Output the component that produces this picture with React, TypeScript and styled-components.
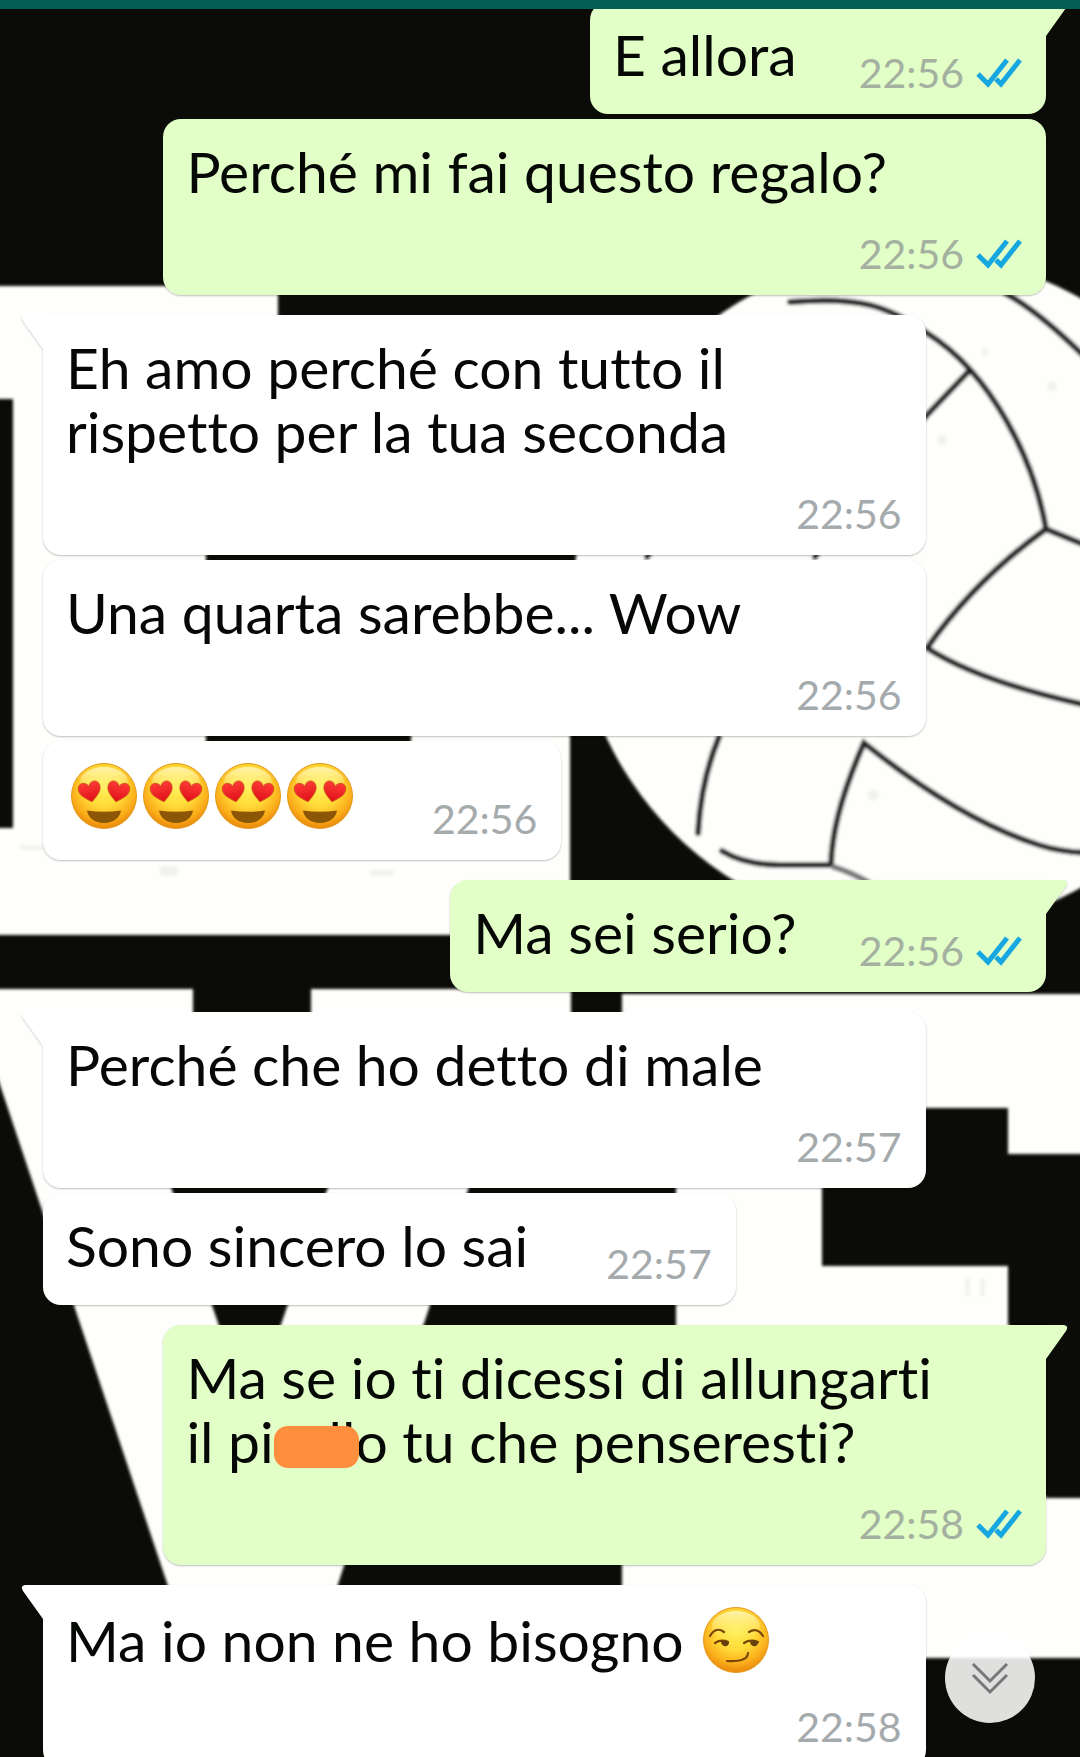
import React from 'react';
import styled, { createGlobalStyle, css } from 'styled-components';

const GlobalStyle = createGlobalStyle`
  *, *::before, *::after { box-sizing: border-box; }
  body { margin: 0; background: #0b0c07; font-family: Lato, "Liberation Sans", sans-serif; }
`;

const Screen = styled.main`
  position: relative;
  height: 100vh;
  overflow: hidden;
  background: #0b0c07;
`;

const Wallpaper = styled.svg`
  position: absolute;
  inset: 0;
  width: 100%;
  height: 100%;
`;

const TopBar = styled.header`
  position: absolute;
  inset: 0 0 auto;
  z-index: 2;
  height: 9px;
  background: #065f54;
`;

const MessageList = styled.ol`
  position: relative;
  display: flex;
  flex-direction: column;
  gap: 20px;
  margin: 0;
  padding: 2px 34px 0 43px;
  list-style: none;
`;

const Group = styled.li<{ $sent: boolean }>`
  display: flex;
  flex-direction: column;
  align-items: ${p => (p.$sent ? 'flex-end' : 'flex-start')};
  gap: 5px;
`;

const Bubble = styled.article<{ $sent: boolean; $tail: boolean; $stacked: boolean }>`
  position: relative;
  display: flex;
  max-width: 88%;
  padding: 20px 24px 13px 23px;
  border-radius: 18px;
  background: ${p => (p.$sent ? '#e1ffc7' : '#ffffff')};
  box-shadow: 0 1px 2px rgba(0, 0, 0, 0.25);
  ${p => p.$stacked && css`flex-direction: column; width: 88%;`}
  ${p => p.$tail && (p.$sent ? css`border-top-right-radius: 0;` : css`border-top-left-radius: 0;`)}
`;

const TailShape = styled.svg<{ $sent: boolean }>`
  position: absolute;
  top: 0;
  ${p => (p.$sent ? css`left: 100%;` : css`right: 100%; transform: scaleX(-1);`)}
  width: 22px;
  height: 34px;
  fill: ${p => (p.$sent ? '#e1ffc7' : '#ffffff')};
  filter: drop-shadow(0 1px 1px rgba(0, 0, 0, 0.2));
  clip-path: inset(0 -4px -4px 0);
`;

const Text = styled.p<{ $emoji: boolean; $stacked: boolean }>`
  margin: 0;
  padding-bottom: ${p => (p.$stacked ? 0 : 15)}px;
  color: #050805;
  font-size: 57px;
  font-variant-ligatures: none;
  line-height: ${p => (p.$emoji ? 71 : 64)}px;
  white-space: pre-line;
`;

const Meta = styled.footer<{ $sent: boolean }>`
  display: flex;
  align-items: center;
  align-self: flex-end;
  gap: 12px;
  margin-left: ${p => (p.$sent ? 62 : 78)}px;
  padding-top: 23px;
  color: ${p => (p.$sent ? '#a4b0a0' : '#a5aaad')};
  font-size: 41px;
  line-height: 56px;
`;

const CheckIcon = styled.svg`
  width: 46px;
  height: 30px;
`;

const Redacted = styled.span`
  position: relative;
  &::after {
    content: '';
    position: absolute;
    inset: 19px -4px 7px 0;
    border-radius: 14px;
    background: #ff8f3e;
  }
`;

const EmojiIcon = styled.svg`
  width: 72px;
  height: 70px;
  vertical-align: -13px;
`;

const GradientStore = styled.svg`
  position: absolute;
  width: 0;
  height: 0;
`;

const ScrollButton = styled.button`
  position: absolute;
  right: 45px;
  bottom: 34px;
  z-index: 1;
  display: grid;
  place-items: center;
  width: 90px;
  height: 90px;
  padding: 0;
  border: 0;
  border-radius: 50%;
  background: rgba(255, 255, 255, 0.87);
  cursor: pointer;
`;

function Background() {
  return (
    <Wallpaper viewBox="0 0 1080 1757" preserveAspectRatio="xMidYMin slice" aria-hidden="true">
      <defs>
        <filter id="soft" x="-5%" y="-5%" width="110%" height="110%">
          <feGaussianBlur stdDeviation="1.5" />
        </filter>
      </defs>
      <g filter="url(#soft)">
        <g fill="#fefefc">
          <path d="M-9 286H278V400H206V828H411V650H570V935H-9V828H13V399H-9Z" />
          <path d="M-9 989H193V1060H130L172 1190L250 1415L327 1190L372 1060H311V989H571V1060H510L468 1190L341 1575L320 1640H186L167 1583L-9 1058Z" />
          <path d="M622 994H1090V1154H1008V1108H822V1266H1008V1498H1090V1658H622V1540H676V1060H622Z" />
          <circle cx="913" cy="593" r="339" />
        </g>
        <path d="M1008 1325V1498H1046V1325Z" fill="#0b0c07" />
        <g fill="none" stroke="#242424" strokeWidth="6" strokeLinecap="round">
          <path d="M790 302C860 296 888 306 927 333C992 374 1034 460 1046 529L1090 547" />
          <path d="M969 371L927 415L850 500L815 557" />
          <path d="M1005 293Q1040 312 1090 362" />
          <path d="M1046 529Q975 580 927 648Q980 682 1090 706" />
          <path d="M719 737Q701 780 698 833" />
          <path d="M722 851Q745 865 780 865H831Q832 815 864 743Q960 820 1039 845Q1060 852 1090 853" />
          <path d="M647 557L680 500" />
          <path d="M834 867Q850 872 868 882" stroke="#777" />
        </g>
        <g fill="#5d5d5d" opacity="0.07">
          <circle cx="985" cy="352" r="4" />
          <circle cx="942" cy="440" r="5" />
          <circle cx="1052" cy="386" r="5" />
          <circle cx="1030" cy="470" r="4" />
          <circle cx="873" cy="795" r="6" />
          <rect x="20" y="845" width="24" height="5" />
          <rect x="160" y="866" width="18" height="10" />
          <rect x="370" y="870" width="24" height="6" />
          <rect x="965" y="1278" width="5" height="18" />
          <rect x="980" y="1278" width="5" height="18" />
        </g>
      </g>
    </Wallpaper>
  );
}

function EmojiDefs() {
  return (
    <GradientStore aria-hidden="true">
      <defs>
        <radialGradient id="face" cx="0.5" cy="0.36" r="0.66">
          <stop offset="0" stopColor="#ffee55" />
          <stop offset="0.45" stopColor="#ffdb38" />
          <stop offset="0.75" stopColor="#fbb01c" />
          <stop offset="1" stopColor="#e8830a" />
        </radialGradient>
        <linearGradient id="shine" x1="0" y1="0" x2="0" y2="1">
          <stop offset="0" stopColor="#fffbd0" stopOpacity="0.75" />
          <stop offset="1" stopColor="#fff27a" stopOpacity="0" />
        </linearGradient>
        <linearGradient id="heart" x1="0" y1="0" x2="0" y2="1">
          <stop offset="0" stopColor="#ff3b35" />
          <stop offset="1" stopColor="#dc0f18" />
        </linearGradient>
      </defs>
    </GradientStore>
  );
}

function Face() {
  return (
    <>
      <circle r="32.5" fill="url(#face)" stroke="#e39a1c" strokeWidth="1" />
      <ellipse cy="-14" rx="24" ry="15" fill="url(#shine)" />
    </>
  );
}

function HeartEyes() {
  const heart = 'M0 10C-5 6-11 2-11-4C-11-11-3-12 0-6C3-12 11-11 11-4C11 2 5 6 0 10Z';
  return (
    <EmojiIcon viewBox="-38 -35 72 70" role="img" aria-label="Faccina con occhi a cuore">
      <Face />
      <g fill="url(#heart)" stroke="#c9541a" strokeWidth="0.8">
        <path d={heart} transform="translate(-14 -4) rotate(-12)" />
        <path d={heart} transform="translate(14 -4) rotate(12)" />
      </g>
      <path d="M-17 14.5Q0 17 17 14.5C16 22 9 27 0 27S-16 22-17 14.5Z" fill="#8b5606" />
    </EmojiIcon>
  );
}

function Smirk() {
  return (
    <EmojiIcon viewBox="-38 -35 72 70" role="img" aria-label="Faccina maliziosa">
      <Face />
      <g fill="none" stroke="#7a4708" strokeWidth="2.2" strokeLinecap="round">
        <path d="M-26-4Q-20-14-12-8" />
        <path d="M13-8Q21-13 27-4" />
        <path d="M-21 3Q-15-1-8 2" />
        <path d="M8 3Q14-1 22 2" />
        <path d="M-9 21Q12 22 12 13" />
      </g>
      <g fill="#68400c">
        <path d="M-15 1Q-8-1-7 3Q-8 7-12 6Q-15 5-15 1Z" />
        <path d="M14 1Q21-1 22 3Q21 7 17 6Q14 5 14 1Z" />
      </g>
    </EmojiIcon>
  );
}

function ReadChecks() {
  return (
    <CheckIcon viewBox="0 0 46 30" role="img" aria-label="Letto" fill="none" stroke="#16a6e0" strokeWidth="5">
      <path d="M2 16L12 26L31 2" />
      <path d="M20 21L25 26L44 2" />
    </CheckIcon>
  );
}

interface MessageProps {
  time: string;
  children: React.ReactNode;
  sent?: boolean;
  tail?: boolean;
  stacked?: boolean;
  emoji?: boolean;
}

function Message({ time, children, sent = false, tail = false, stacked = false, emoji = false }: MessageProps) {
  return (
    <Bubble $sent={sent} $tail={tail} $stacked={stacked}>
      {tail && (
        <TailShape $sent={sent} viewBox="0 0 22 34" aria-hidden="true">
          <path d="M0 0H18Q23 1 20 6L0 34Z" />
        </TailShape>
      )}
      <Text $emoji={emoji} $stacked={stacked}>{children}</Text>
      <Meta $sent={sent}>
        <time>{time}</time>
        {sent && <ReadChecks />}
      </Meta>
    </Bubble>
  );
}

export default function App() {
  return (
    <Screen>
      <GlobalStyle />
      <Background />
      <EmojiDefs />
      <TopBar />
      <MessageList>
        <Group $sent>
          <Message sent tail time="22:56">E allora</Message>
          <Message sent stacked time="22:56">Perché mi fai questo regalo?</Message>
        </Group>
        <Group $sent={false}>
          <Message tail stacked time="22:56">{'Eh amo perché con tutto il\nrispetto per la tua seconda'}</Message>
          <Message stacked time="22:56">Una quarta sarebbe... Wow</Message>
          <Message emoji time="22:56"><HeartEyes /><HeartEyes /><HeartEyes /><HeartEyes /></Message>
        </Group>
        <Group $sent>
          <Message sent tail time="22:56">Ma sei serio?</Message>
        </Group>
        <Group $sent={false}>
          <Message tail stacked time="22:57">Perché che ho detto di male</Message>
          <Message time="22:57">Sono sincero lo sai</Message>
        </Group>
        <Group $sent>
          <Message sent tail stacked time="22:58">
            {'Ma se io ti dicessi di allungarti\nil pi'}<Redacted>sell</Redacted>o tu che penseresti?
          </Message>
        </Group>
        <Group $sent={false}>
          <Message tail stacked emoji time="22:58">Ma io non ne ho bisogno <Smirk /></Message>
        </Group>
      </MessageList>
      <ScrollButton type="button" aria-label="Vai agli ultimi messaggi">
        <svg width="40" height="34" viewBox="0 0 40 34" fill="none" stroke="#777777" strokeWidth="3">
          <path d="M3 3L20 20L37 3" />
          <path d="M3 14L20 31L37 14" />
        </svg>
      </ScrollButton>
    </Screen>
  );
}
